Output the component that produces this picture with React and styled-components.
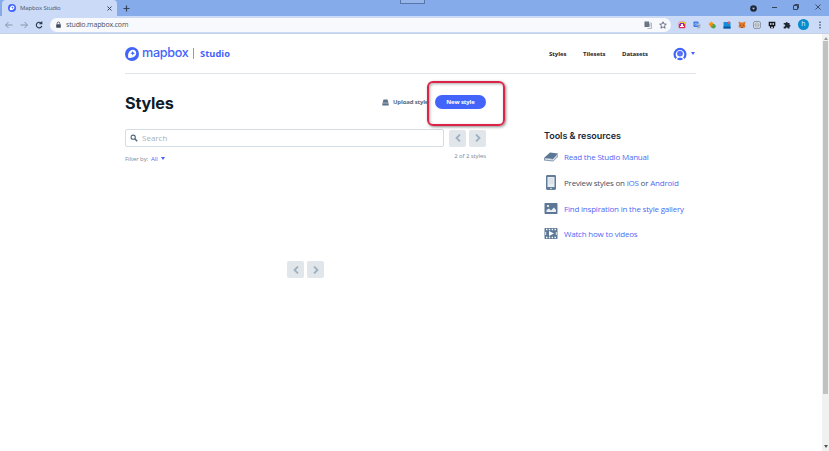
import React from "react";
import styled, { createGlobalStyle } from "styled-components";

const Global = createGlobalStyle`
  * { box-sizing: border-box; }
  body { margin: 0; background: #fff; overflow: hidden; font-family: "Open Sans", sans-serif; }
  svg { display: block; flex: none; }
`;

const Window = styled.div`
  width: 829px; height: 451px; display: flex; flex-direction: column; overflow: hidden;
  position: relative; background: #fff;
`;
const TabBar = styled.div`
  height: 16px; flex: none; background: #85abea; display: flex; align-items: center; padding-left: 2px;
`;
const Tab = styled.div`
  width: 115px; height: 16px; background: #cbdbf7; border-radius: 4px 4px 0 0;
  display: flex; align-items: center; padding: 0 5px 0 6px; color: #45546d; font-size: 6px;
`;
const TabTitle = styled.span`
  flex: 1; margin-left: 4px; line-height: 16px; letter-spacing: -0.13px;
`;
const NewTab = styled.div`margin-left: 6px;`;
const WindowControls = styled.div`
  margin-left: auto; display: flex; align-items: center; padding: 0 8px 2px 0;
`;
const ControlSlot = styled.div`margin-left: ${(p) => p.$gap}px;`;
const Handle = styled.div`
  position: absolute; left: 400px; top: -1px; width: 25px; height: 5px;
  border: 1px solid #5777aa; background: #96b6eb;
`;
const Toolbar = styled.div`
  height: 18px; flex: none; background: #cbdbf7; display: flex; align-items: center;
  padding: 0 5px 0 4px; border-bottom: 1px solid #c4d1e8;
`;
const NavIcons = styled.div`display: flex; gap: 5px; width: 46px; flex: none;`;
const Omnibox = styled.div`
  width: 621px; height: 14px; border-radius: 7px; background: #f7f9fd; display: flex; align-items: center;
  padding: 0 4px 0 5px; flex: none;
`;
const Url = styled.span`
  font-size: 7px; color: #475161; margin-left: 4px; line-height: 14px; flex: 1; letter-spacing: -0.16px;
`;
const OmniIcons = styled.div`display: flex; gap: 7px; align-items: center;`;
const Extensions = styled.div`
  margin-left: 7px; flex: 1; display: flex; align-items: center; justify-content: space-between;
`;
const Avatar = styled.div`
  width: 11px; height: 11px; border-radius: 50%; background: #078bcc; color: #d9f3ff;
  font-size: 7px; line-height: 10px; text-align: center;
`;
const Body = styled.div`flex: 1; display: flex; min-height: 0;`;
const Page = styled.div`width: 822px; padding: 0 126px 0 125px;`;
const Scrollbar = styled.div`
  width: 7px; background: #f1f1f1; display: flex; flex-direction: column; align-items: center; padding: 3px 1px 3px;
`;
const Thumb = styled.div`width: 5px; height: 353px; background: #c1c1c1; margin: 1px 0 auto;`;

const Header = styled.header`
  height: 40px; border-bottom: 1px solid #dfe4ec; display: flex; align-items: center;
`;
const Brand = styled.div`display: flex; align-items: center; color: #4264fb; height: 20px;`;
const Wordmark = styled.span`
  font: 500 12.6px/16px "Inter", sans-serif; letter-spacing: -0.3px; margin: -2px 0 0 3px; width: 47px; white-space: nowrap;
`;
const Divider = styled.i`width: 1px; height: 11px; background: #8095f8; margin-left: 4px;`;
const Product = styled.span`
  font: 700 9.3px/14px "Open Sans", sans-serif; letter-spacing: 0.05px; margin-left: 6px;
`;
const Menu = styled.nav`
  margin-left: auto; display: flex; align-items: center; font-size: 6px; font-weight: 700; color: #1b2636;
`;
const MenuItem = styled.a`
  width: ${(p) => p.$w}px; line-height: 12px; white-space: nowrap; letter-spacing: -0.05px;
`;
const Columns = styled.div`display: flex;`;
const Main = styled.main`width: 361px;`;
const TitleRow = styled.div`display: flex; align-items: center; height: 26px; margin-top: 15px;`;
const Title = styled.h1`
  font: 700 16.2px/26px "Inter", sans-serif; margin: 1px 0 0; color: #0d1d2b; letter-spacing: -0.2px;
`;
const Upload = styled.div`
  margin-left: auto; width: 53px; display: flex; align-items: center; gap: 4px;
  font-size: 6px; font-weight: 700; color: #546b82; white-space: nowrap; letter-spacing: -0.17px;
`;
const Primary = styled.button`
  width: 51px; height: 14px; border: 0; border-radius: 7px; background: #4264fb; color: #fff; padding: 0;
  font: 700 6px/14px "Open Sans", sans-serif; letter-spacing: -0.1px;
`;
const Highlight = styled.div`
  position: absolute; left: 427px; top: 81px; width: 78px; height: 45px;
  border: 2px solid #db2448; border-radius: 6px; box-shadow: 1px 1px 3px #0007, inset 1px 1px 3px #0005;
`;
const SearchRow = styled.div`display: flex; margin-top: 14px; height: 18px; align-items: center;`;
const SearchBox = styled.div`
  width: 319px; height: 18px; border: 1px solid #d3dde6; border-radius: 2px; display: flex; align-items: center;
  padding-left: 4px; gap: 4px; font-size: 8px; line-height: 14px; color: #a6b3c0; margin-right: 5px;
`;
const Pager = styled.div`
  display: flex; gap: 3px; ${(p) => p.$centered && "justify-content: center; margin-top: 96px;"}
`;
const PageButton = styled.div`
  width: 17px; height: 17px; border-radius: 2px; background: #e1e6eb; display: flex; align-items: center; justify-content: center;
`;
const MetaRow = styled.div`
  display: flex; justify-content: space-between; font-size: 6px; color: #76889a; line-height: 10px;
  margin-top: 4px; height: 14px; letter-spacing: -0.08px;
`;
const Filter = styled.span`display: flex; gap: 3px; align-items: center; height: 15px;`;
const Blue = styled.a`color: #4f69f5;`;
const Aside = styled.aside`margin: 55px 0 0 58px;`;
const AsideTitle = styled.h2`
  font: 600 9px/14px "Inter", sans-serif; color: #17283a; margin: 0 0 1px; letter-spacing: -0.03px;
`;
const Resource = styled.div`
  display: flex; align-items: center; height: 25.7px; gap: 6px; font-size: 8px; letter-spacing: -0.2px;
  color: #3e5063; white-space: nowrap;
`;

const Mark = ({ size }) => (
  <svg width={size} height={size} viewBox="0 0 14 14">
    <circle cx="7" cy="7" r="7" fill="#4264fb" />
    <path d="M3.3 10.7C2.5 7.6 3.8 3.1 7.8 2.8c2 0 3.7 1.7 3.4 3.7-.3 3.4-4.8 5-7.9 4.2Z" fill="#fff" />
    <path d="m7.7 4 .7 1.6L10 6.3 8.4 7l-.7 1.6L7 7l-1.6-.7L7 5.6Z" fill="#4264fb" />
  </svg>
);
const Line = ({ d, w = 8, h = 8, color = "#34445b", sw = 1 }) => (
  <svg width={w} height={h} viewBox={`0 0 ${w} ${h}`} fill="none" stroke={color} strokeWidth={sw}><path d={d} /></svg>
);
const Caret = ({ w = 4 }) => <svg width={w} height="3" viewBox="0 0 4 3"><path d="M0 0h4L2 3Z" fill="#4264fb" /></svg>;
const Search = () => (
  <svg width="8" height="8" viewBox="0 0 8 8" fill="none" stroke="#52677d">
    <circle cx="3.2" cy="3.2" r="2.1" strokeWidth="1.1" /><path d="m4.8 4.8 2.4 2.4" strokeWidth="1.5" />
  </svg>
);
const Arrows = () => (
  <>
    <PageButton><Line d="M6 .5 2.5 4 6 7.5" color="#9eb0c0" sw={1.8} /></PageButton>
    <PageButton><Line d="M2 .5 5.5 4 2 7.5" color="#9eb0c0" sw={1.8} /></PageButton>
  </>
);
const Ext = ({ children }) => <svg width="8" height="8" viewBox="0 0 8 8">{children}</svg>;
const Art = ({ children }) => <svg width="14" height="15" viewBox="0 0 14 15">{children}</svg>;

export default function App() {
  return (
    <Window>
      <Global />
      <TabBar>
        <Tab><Mark size={8} /><TabTitle>Mapbox Studio</TabTitle><Line w={5} h={5} d="M.5.5l4 4m0-4-4 4" /></Tab>
        <NewTab><Line w={7} h={7} d="M3.5.5v6M.5 3.5h6" sw={1.2} /></NewTab>
        <WindowControls>
          <ControlSlot $gap={0}><svg width="7" height="9" viewBox="0 0 7 9"><circle cx="3.5" cy="5.5" r="3.3" fill="#202734" /><path d="M2 4.7h3L3.5 6.8Z" fill="#a9c3ee" /></svg></ControlSlot>
          <ControlSlot $gap={15}><Line w={5} h={5} d="M0 2.5h5" /></ControlSlot>
          <ControlSlot $gap={16}><Line w={6} h={6} d="M.5 1.5h4v4h-4Zm1-1h4v4" /></ControlSlot>
          <ControlSlot $gap={16}><Line w={6} h={6} sw={0.9} d="M.5.5l5 5m0-5-5 5" /></ControlSlot>
        </WindowControls>
      </TabBar>
      <Handle />
      <Toolbar>
        <NavIcons>
          <Line w={10} h={8} d="M8.5 4h-7m3-3-3 3 3 3" color="#8996ab" />
          <Line w={10} h={8} d="M1.5 4h7m-3-3 3 3-3 3" color="#8996ab" />
          <Line w={10} h={8} d="M7.2 2.2A2.8 2.8 0 1 0 7.8 5M7.8.5v2.3H5.3" color="#29374b" sw={1.1} />
        </NavIcons>
        <Omnibox>
          <svg width="7" height="8" viewBox="0 0 7 8"><path d="M2.2 3.3v-1a1.3 1.3 0 0 1 2.6 0v1" fill="none" stroke="#414b5b" strokeWidth=".8" /><rect x="1.2" y="3.2" width="4.6" height="3.6" rx=".5" fill="#414b5b" /></svg>
          <Url>studio.mapbox.com</Url>
          <OmniIcons>
            <Ext><rect x=".5" y=".5" width="4.5" height="5.5" fill="#66717f" /><path d="M4.5 2h3v5.5H3.5M2 2h2M2 4h1.5M5 4h2M5.5 3v1q0 1-1 2m.5-1 1.5 1" stroke="#88919c" strokeWidth=".6" fill="none" /></Ext>
            <Ext><path d="m4 .8 1 2.2 2.3.2-1.8 1.6.6 2.4L4 6 1.9 7.2l.6-2.4L.7 3.2 3 3Z" fill="none" stroke="#3a4657" strokeWidth=".7" /></Ext>
          </OmniIcons>
        </Omnibox>
        <Extensions>
          <Ext><rect x=".7" y=".7" width="6.6" height="6.6" rx="1" fill="#e72652" /><path d="M1 1h6v2H1Z" fill="#efc32d" /><path d="M2 2h4v2H2Z" fill="#7736b7" /><path d="M2 5h4v1H2ZM3 3h2v2H3Z" fill="#fff" /></Ext>
          <Ext><rect x=".5" y=".5" width="5" height="5.5" rx=".7" fill="#3978e8" /><path d="M4 2.5h3.5v5H4.3L3.5 6H5Z" fill="#b3bfd2" /><path d="M4 2.6a1.2 1.2 0 1 0 .1 1H3.2" stroke="#edf4ff" strokeWidth=".5" fill="none" /><path d="M5.2 4.5h1.8M6.2 4.5 5.3 6.5" stroke="#61779b" strokeWidth=".5" /></Ext>
          <Ext><path d="m.5 3 3-2.5 2 2v3L3.5 7Z" fill="#fa9910" /><circle cx="5.5" cy="5.3" r="2.2" fill="#4ba34a" /><path d="M1.8 4 4.5 2.5v3Z" fill="#f58220" /></Ext>
          <Ext><path d="M.5 1h7v6.5h-7Z" fill="#168cda" /><path d="M.5 5.5h7v2h-7Z" fill="#0b579f" /><path d="M4.8.6H7v2.7l-1.1-.8-1.1.8Z" fill="#e9536c" /></Ext>
          <Ext><path d="m.5.5 2.5 1h2l2.5-1L7 3.5l.5 2L6 7.2 5 6.5H3L2 7.2.5 5.5l.5-2Z" fill="#df7628" /><path d="m2 4 1 .5m3-.5-1 .5m-2 2h2" stroke="#543a34" strokeWidth=".7" /></Ext>
          <Ext><rect x=".7" y=".7" width="6.6" height="6.6" rx="1" fill="#edf0f4" stroke="#74808e" strokeWidth=".9" /><circle cx="4" cy="4" r="2" fill="none" stroke="#7c8793" strokeWidth=".6" /><path d="M2.5 4h3" stroke="#53606e" strokeWidth=".6" /></Ext>
          <Ext><path d="M.7.8h6.6v4.5H6v2H2v-2H.7Z" fill="#11151d" /><path d="M2 2.3h1.5v1.5H2Zm2.5 0H6v1.5H4.5ZM3 5.7h2v1H3Z" fill="#e9eef6" /></Ext>
          <Ext><path d="M.7 2h2a1 1 0 1 1 2 0h1.8v1.7a1 1 0 1 1 0 2v1.8H4.8a1 1 0 1 0-2 0H.7V5.4a1 1 0 1 0 0-1.8Z" fill="#202936" /></Ext>
          <Avatar>h</Avatar>
          <svg width="8" height="8" viewBox="0 0 8 8" fill="#303c4c"><circle cx="4" cy="1.3" r=".8" /><circle cx="4" cy="4" r=".8" /><circle cx="4" cy="6.7" r=".8" /></svg>
        </Extensions>
      </Toolbar>
      <Body>
        <Page>
          <Header>
            <Brand><Mark size={14} /><Wordmark>mapbox</Wordmark><Divider /><Product>Studio</Product></Brand>
            <Menu>
              <MenuItem $w={34}>Styles</MenuItem><MenuItem $w={39}>Tilesets</MenuItem><MenuItem $w={51}>Datasets</MenuItem>
              <svg width="14" height="14" viewBox="0 0 14 14"><path d="M3.2 11.2a5.4 5.4 0 1 1 7.6 0" fill="none" stroke="#4264fb" strokeWidth="2.2" /><circle cx="7" cy="6.6" r="2.9" fill="#5774fb" /><path d="M4 12.2c1-1.8 5-1.8 6 0-1.7 1.3-4.3 1.3-6 0Z" fill="#4264fb" /></svg>
              <ControlSlot $gap={4}><Caret /></ControlSlot>
              <ControlSlot $gap={1} />
            </Menu>
          </Header>
          <Columns>
            <Main>
              <TitleRow>
                <Title>Styles</Title>
                <Upload><svg width="7" height="7" viewBox="0 0 7 7" fill="#5c7288"><path d="M1.5.5h4l1 3.2h-6ZM.3 4.3h6.4v2.2H.3Z" /></svg>Upload style</Upload>
                <Primary>New style</Primary>
              </TitleRow>
              <SearchRow><SearchBox><Search />Search</SearchBox><Pager><Arrows /></Pager></SearchRow>
              <MetaRow><Filter>Filter by: <Blue>All</Blue><Caret /></Filter><span>2 of 2 styles</span></MetaRow>
              <Pager $centered><Arrows /></Pager>
            </Main>
            <Aside>
              <AsideTitle>Tools &amp; resources</AsideTitle>
              <Resource><Art><path d="M0 9 6 3.5l8 1L9 10Z" fill="#5a7696" /><path d="M0 9v2.5l9 1 5-4.5V5L9 10Z" fill="#8499b0" /><path d="m1 10 8 1 4.5-4" stroke="#fff" fill="none" strokeWidth=".8" /></Art><Blue>Read the Studio Manual</Blue></Resource>
              <Resource><Art><rect x="2" y="0" width="10" height="15" rx="1.4" fill="#627c98" /><path d="M3.5 2h7v10h-7Z" fill="#e7edf2" /><path d="M4.5 4h5m-5 2h5m-5 2h5" stroke="#c2ced9" strokeWidth=".6" /><circle cx="7" cy="13.5" r=".7" fill="#fff" /></Art><span>Preview styles on <Blue>iOS</Blue> or <Blue>Android</Blue></span></Resource>
              <Resource><Art><rect x=".5" y="2" width="13" height="11" rx=".7" fill="#5d7896" /><circle cx="4" cy="5" r="1.1" fill="#fff" /><path d="M2.5 11V9L5 7.5l2 2 3-3 2 2.5v2Z" fill="#e9eff4" /></Art><Blue>Find inspiration in the style gallery</Blue></Resource>
              <Resource><Art><rect x=".5" y="2" width="13" height="11" rx=".7" fill="#5d7896" /><path d="M2 3.5h10M2 11.5h10" stroke="#fff" strokeWidth="1.4" strokeDasharray="1.4 1.45" /><path d="M1.7 6v3m10.6-3v3" stroke="#e5ebf1" strokeWidth="1" /><path d="m5 5 5 2.5L5 10Z" fill="#fff" /></Art><Blue>Watch how to videos</Blue></Resource>
            </Aside>
          </Columns>
        </Page>
        <Scrollbar>
          <svg width="4" height="3" viewBox="0 0 4 3"><path d="M0 3h4L2 0Z" fill="#999" /></svg>
          <Thumb />
          <svg width="4" height="3" viewBox="0 0 4 3"><path d="M0 0h4L2 3Z" fill="#555" /></svg>
        </Scrollbar>
      </Body>
      <Highlight />
    </Window>
  );
}
